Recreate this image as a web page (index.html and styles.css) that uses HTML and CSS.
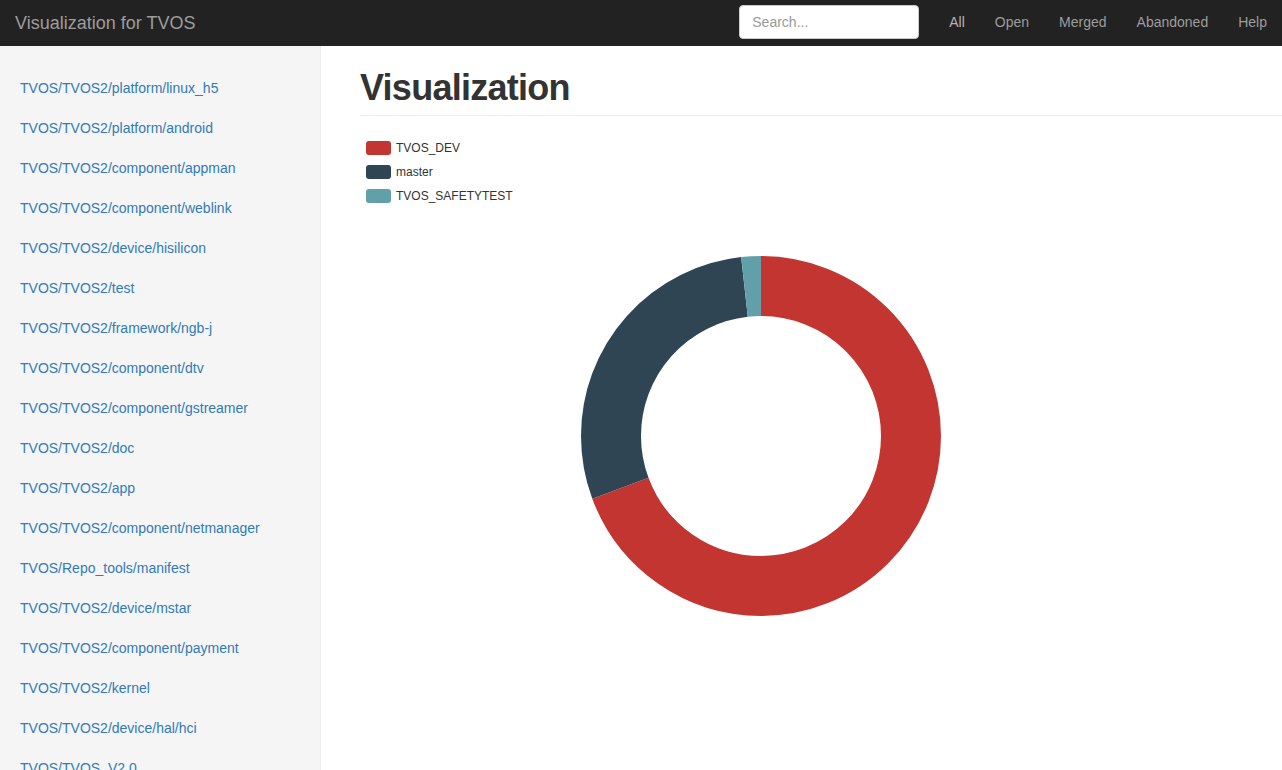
FILE: index.html
```html
<!DOCTYPE html>
<html lang="en">
<head>
<meta charset="utf-8">
<title>Visualization for TVOS</title>
<link rel="stylesheet" href="styles.css">
</head>
<body>
<nav class="navbar">
  <a class="brand" href="#">Visualization for TVOS</a>
  <div class="nav-right">
    <input class="search" type="text" placeholder="Search...">
    <ul class="nav-links">
      <li><a class="active" href="#">All</a></li>
      <li><a href="#">Open</a></li>
      <li><a href="#">Merged</a></li>
      <li><a href="#">Abandoned</a></li>
      <li><a href="#">Help</a></li>
    </ul>
  </div>
</nav>
<div class="layout">
  <aside class="sidebar">
    <ul class="side-nav">
      <li><a href="#">TVOS/TVOS2/platform/linux_h5</a></li>
      <li><a href="#">TVOS/TVOS2/platform/android</a></li>
      <li><a href="#">TVOS/TVOS2/component/appman</a></li>
      <li><a href="#">TVOS/TVOS2/component/weblink</a></li>
      <li><a href="#">TVOS/TVOS2/device/hisilicon</a></li>
      <li><a href="#">TVOS/TVOS2/test</a></li>
      <li><a href="#">TVOS/TVOS2/framework/ngb-j</a></li>
      <li><a href="#">TVOS/TVOS2/component/dtv</a></li>
      <li><a href="#">TVOS/TVOS2/component/gstreamer</a></li>
      <li><a href="#">TVOS/TVOS2/doc</a></li>
      <li><a href="#">TVOS/TVOS2/app</a></li>
      <li><a href="#">TVOS/TVOS2/component/netmanager</a></li>
      <li><a href="#">TVOS/Repo_tools/manifest</a></li>
      <li><a href="#">TVOS/TVOS2/device/mstar</a></li>
      <li><a href="#">TVOS/TVOS2/component/payment</a></li>
      <li><a href="#">TVOS/TVOS2/kernel</a></li>
      <li><a href="#">TVOS/TVOS2/device/hal/hci</a></li>
      <li><a href="#">TVOS/TVOS_V2.0</a></li>
      <li><a href="#">TVOS/TVOS2/device/amlogic</a></li>
    </ul>
  </aside>
  <main class="main">
    <h1 class="page-header">Visualization</h1>
    <ul class="legend">
      <li><span class="swatch swatch-red"></span>TVOS_DEV</li>
      <li><span class="swatch swatch-dark"></span>master</li>
      <li><span class="swatch swatch-teal"></span>TVOS_SAFETYTEST</li>
    </ul>
    <div class="chart">
      <svg width="800" height="400" viewBox="0 0 800 400">
        <g transform="translate(401 200) rotate(-90)">
          <circle r="150" fill="none" stroke="#c23531" stroke-width="60" stroke-dasharray="653.2 942.48" stroke-dashoffset="0"/>
          <circle r="150" fill="none" stroke="#2f4554" stroke-width="60" stroke-dasharray="272.3 942.48" stroke-dashoffset="-653.2"/>
          <circle r="150" fill="none" stroke="#61a0a8" stroke-width="60" stroke-dasharray="17 942.48" stroke-dashoffset="-925.5"/>
        </g>
      </svg>
    </div>
  </main>
</div>
</body>
</html>
```
FILE: styles.css
```css
* { box-sizing: border-box; }
html, body {
  margin: 0;
  height: 100%;
  overflow: hidden;
}
body {
  font-family: "Liberation Sans", Arial, Helvetica, sans-serif;
  font-size: 14px;
  line-height: 20px;
  color: #333;
  background: #fff;
  display: flex;
  flex-direction: column;
}
a { text-decoration: none; }
ul { list-style: none; margin: 0; padding: 0; }

.navbar {
  flex: 0 0 46px;
  height: 46px;
  background: #222;
  display: flex;
  align-items: center;
  padding-left: 15px;
}
.brand {
  color: #9d9d9d;
  font-size: 18px;
  line-height: 20px;
}
.nav-right {
  margin-left: auto;
  display: flex;
  align-items: center;
}
.search {
  width: 180px;
  height: 34px;
  margin-right: 15px;
  margin-top: -2px;
  padding: 6px 12px;
  border: 1px solid #ccc;
  border-radius: 4px;
  background: #fff;
  font-family: inherit;
  font-size: 14px;
  color: #555;
}
.search::placeholder { color: #999; }
.nav-links {
  display: flex;
}
.nav-links a {
  display: block;
  padding: 12px 15px 14px;
  color: #9d9d9d;
  font-size: 14px;
  line-height: 20px;
}
.nav-links a.active { color: #b4b4b4; }

.layout {
  flex: 1;
  display: flex;
  min-height: 0;
}
.sidebar {
  flex: 0 0 321px;
  background: #f5f5f5;
  border-right: 1px solid #eee;
  padding-top: 22px;
  overflow: hidden;
}
.side-nav a {
  display: block;
  padding: 10px 20px;
  color: #337ab7;
  font-size: 14px;
  line-height: 20px;
}
.main {
  flex: 1;
  padding: 20px 0 0 39px;
  overflow: hidden;
}
.page-header {
  margin: 0 0 20px;
  padding: 2px 0 7px;
  border-bottom: 1px solid #eee;
  font-size: 36px;
  line-height: 40px;
  font-weight: bold;
  letter-spacing: -0.75px;
  color: #333;
}
.legend {
  padding-left: 6px;
}
.legend li {
  display: flex;
  align-items: center;
  height: 24px;
  font-size: 12px;
  color: #333;
}
.swatch {
  width: 25px;
  height: 14px;
  border-radius: 3px;
  margin-right: 5px;
}
.swatch-red { background: #c23531; }
.swatch-dark { background: #2f4554; }
.swatch-teal { background: #61a0a8; }
.chart {
  margin-top: 28px;
}
.chart svg { display: block; }
```
